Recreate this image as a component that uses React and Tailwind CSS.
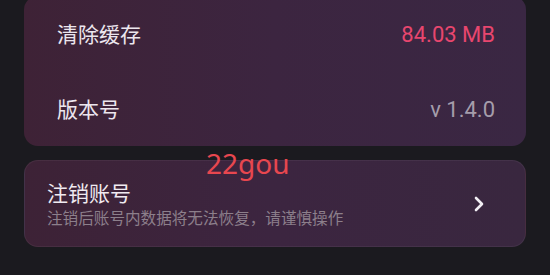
export default function App() {
  const font = { fontFamily: '"Noto Sans", "Noto Sans CJK SC", sans-serif' };
  return (
    <div
      className="relative w-[550px] h-[275px] overflow-hidden bg-[#1b1a1f] px-[24px]"
      style={font}
    >
      <div className="-mt-[4px] rounded-[14px] bg-gradient-to-r from-[#3e2236] via-[#3c2540] to-[#3a2743] pl-[33px] pr-[31px]">
        <div className="flex h-[77px] items-center justify-between">
          <span className="text-[21px] text-[#ece6ee]">清除缓存</span>
          <span className="text-[22px] text-[#e8466e]" style={{ fontFamily: 'Roboto, "Noto Sans", sans-serif' }}>84.03 MB</span>
        </div>
        <div className="flex h-[73px] items-center justify-between">
          <span className="text-[21px] text-[#ece6ee]">版本号</span>
          <span className="text-[22px] text-[#a59dab]" style={{ fontFamily: 'Roboto, "Noto Sans", sans-serif' }}>v 1.4.0</span>
        </div>
      </div>

      <div className="mt-[14px] flex h-[87px] items-center justify-between rounded-[14px] border border-white/5 bg-gradient-to-r from-[#3d2236] via-[#3c2540] to-[#39273f] pl-[22px] pr-[40px]">
        <div className="flex flex-col">
          <span className="text-[21px] leading-[26px] text-[#f0eaf0]">注销账号</span>
          <span className="mt-[2px] text-[15.6px] leading-[20px] text-[#8c7f8b]">注销后账号内数据将无法恢复，请谨慎操作</span>
        </div>
        <svg width="12" height="16" viewBox="0 0 12 16" className="mt-[1px]">
          <polyline points="3,2 9,8 3,14" fill="none" stroke="#f2eef4" strokeWidth="2.6" strokeLinecap="round" strokeLinejoin="round" />
        </svg>
      </div>

      <div
        className="absolute left-[206px] top-[144px] text-[28px] leading-[38px] text-[#e8474f]"
        style={{ fontFamily: '"Noto Sans", sans-serif' }}
      >
        22gou
      </div>
    </div>
  );
}
